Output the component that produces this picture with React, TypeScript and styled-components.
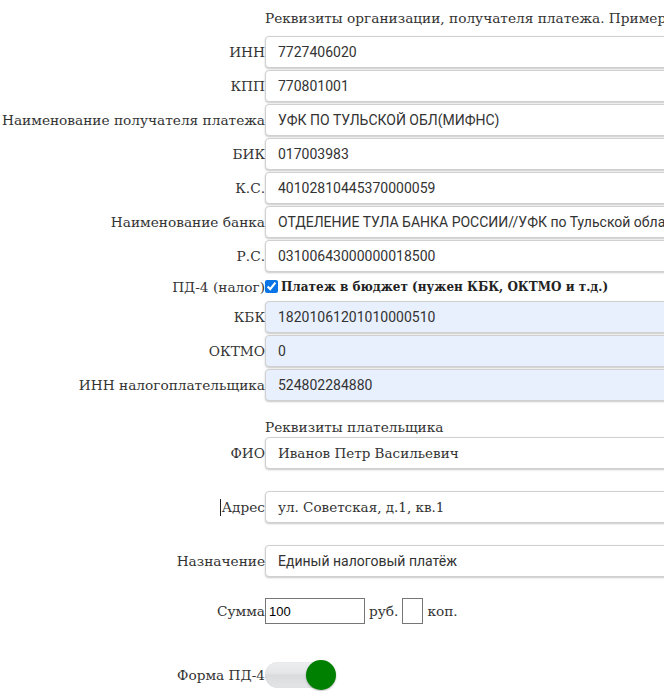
import React from 'react'
import styled, { createGlobalStyle } from 'styled-components'

const GlobalStyle = createGlobalStyle`
  html, body {
    margin: 0;
    padding: 0;
    background: #fff;
    overflow: hidden;
  }
  body {
    font-family: "DejaVu Serif", "Liberation Serif", serif;
    font-size: 13.7px;
    color: #333;
  }
`

const Form = styled.div`
  width: 900px;
  padding-top: 1px;
`

const Row = styled.div<{ $height?: number; $mt?: number }>`
  display: grid;
  grid-template-columns: 265px 1fr;
  align-items: center;
  height: ${({ $height }) => $height ?? 34}px;
  margin-top: ${({ $mt }) => $mt ?? 0}px;
`

const Label = styled.label`
  text-align: right;
  white-space: nowrap;
  font-size: 13.7px;
  color: #333;
`

const Caret = styled.span`
  display: inline-block;
  width: 1px;
  height: 17px;
  margin-right: 1px;
  background: #222;
  vertical-align: -4px;
`

const Heading = styled.div<{ $bottom?: boolean }>`
  white-space: nowrap;
  font-size: 13.7px;
  color: #333;
  align-self: ${({ $bottom }) => ($bottom ? 'end' : 'center')};
  padding-bottom: ${({ $bottom }) => ($bottom ? '1px' : '0')};
`

const TextInput = styled.input<{ $filled?: boolean; $serif?: boolean }>`
  box-sizing: border-box;
  width: 460px;
  height: 32px;
  padding: 0 12px;
  border: 1px solid #d0d0d0;
  border-radius: 4px;
  box-shadow: 0 1px 2px rgba(0, 0, 0, 0.22);
  background: ${({ $filled }) => ($filled ? '#e8f0fe' : '#fff')};
  font-family: ${({ $serif }) =>
    $serif ? '"DejaVu Serif", "Liberation Serif", serif' : 'Roboto, "Noto Sans", sans-serif'};
  font-size: ${({ $serif }) => ($serif ? '13.5px' : '14px')};
  color: #333;
  outline: none;
`

const CheckLine = styled.div`
  display: flex;
  align-items: center;
  gap: 3px;
  white-space: nowrap;
  font-weight: bold;
  font-size: 12px;
  color: #222;
`

const Check = styled.input`
  width: 13px;
  height: 13px;
  margin: 0;
  accent-color: #0b75e6;
`

const SumLine = styled.div`
  display: flex;
  align-items: center;
  gap: 4px;
  font-size: 13.7px;
  color: #333;
`

const SmallInput = styled.input<{ $w: number }>`
  box-sizing: border-box;
  width: ${({ $w }) => $w}px;
  height: 26px;
  margin: 0;
  padding: 0 3px;
  border: 1px solid #767676;
  border-radius: 0;
  font-family: "Liberation Sans", Arial, sans-serif;
  font-size: 13px;
  color: #000;
  outline: none;
`

const Switch = styled.div`
  position: relative;
  width: 71px;
  height: 30px;
`

const Track = styled.div`
  position: absolute;
  left: 0;
  top: 2px;
  width: 64px;
  height: 26px;
  border-radius: 13px;
  background: linear-gradient(#eceeef 0%, #e3e5e7 45%, #d9dbdd 50%, #e3e5e7 100%);
  box-shadow: inset 0 0 1px rgba(0, 0, 0, 0.15);
`

const Knob = styled.div`
  position: absolute;
  right: 0;
  top: 0;
  width: 30px;
  height: 30px;
  border-radius: 50%;
  background: #008000;
  box-shadow: 0 1px 2px rgba(0, 0, 0, 0.3);
`

type Field = { label: string; value: string; filled?: boolean }

const orgFields: Field[] = [
  { label: 'ИНН', value: '7727406020' },
  { label: 'КПП', value: '770801001' },
  { label: 'Наименование получателя платежа', value: 'УФК ПО ТУЛЬСКОЙ ОБЛ(МИФНС)' },
  { label: 'БИК', value: '017003983' },
  { label: 'К.С.', value: '40102810445370000059' },
  { label: 'Наименование банка', value: 'ОТДЕЛЕНИЕ ТУЛА БАНКА РОССИИ//УФК по Тульской области' },
  { label: 'Р.С.', value: '03100643000000018500' },
]

const taxFields: Field[] = [
  { label: 'КБК', value: '18201061201010000510', filled: true },
  { label: 'ОКТМО', value: '0', filled: true },
  { label: 'ИНН налогоплательщика', value: '524802284880', filled: true },
]

export default function App() {
  return (
    <>
      <GlobalStyle />
      <Form>
        <Row>
          <span />
          <Heading>Реквизиты организации, получателя платежа. Пример</Heading>
        </Row>
        {orgFields.map((f) => (
          <Row key={f.label}>
            <Label>{f.label}</Label>
            <TextInput defaultValue={f.value} />
          </Row>
        ))}
        <Row $height={27}>
          <Label>ПД-4 (налог)</Label>
          <CheckLine>
            <Check type="checkbox" defaultChecked />
            Платеж в бюджет (нужен КБК, ОКТМО и т.д.)
          </CheckLine>
        </Row>
        {taxFields.map((f) => (
          <Row key={f.label}>
            <Label>{f.label}</Label>
            <TextInput defaultValue={f.value} $filled={f.filled} />
          </Row>
        ))}
        <Row>
          <span />
          <Heading $bottom>Реквизиты плательщика</Heading>
        </Row>
        <Row>
          <Label>ФИО</Label>
          <TextInput defaultValue="Иванов Петр Васильевич" $serif />
        </Row>
        <Row $mt={20}>
          <Label>
            <Caret />
            Адрес
          </Label>
          <TextInput defaultValue="ул. Советская, д.1, кв.1" $serif />
        </Row>
        <Row $mt={20}>
          <Label>Назначение</Label>
          <TextInput defaultValue="Единый налоговый платёж" />
        </Row>
        <Row $height={28} $mt={19}>
          <Label>Сумма</Label>
          <SumLine>
            <SmallInput $w={100} defaultValue="100" />
            <span>руб.</span>
            <SmallInput $w={21} />
            <span>коп.</span>
          </SumLine>
        </Row>
        <Row $height={32} $mt={34}>
          <Label>Форма ПД-4</Label>
          <Switch>
            <Track />
            <Knob />
          </Switch>
        </Row>
      </Form>
    </>
  )
}
